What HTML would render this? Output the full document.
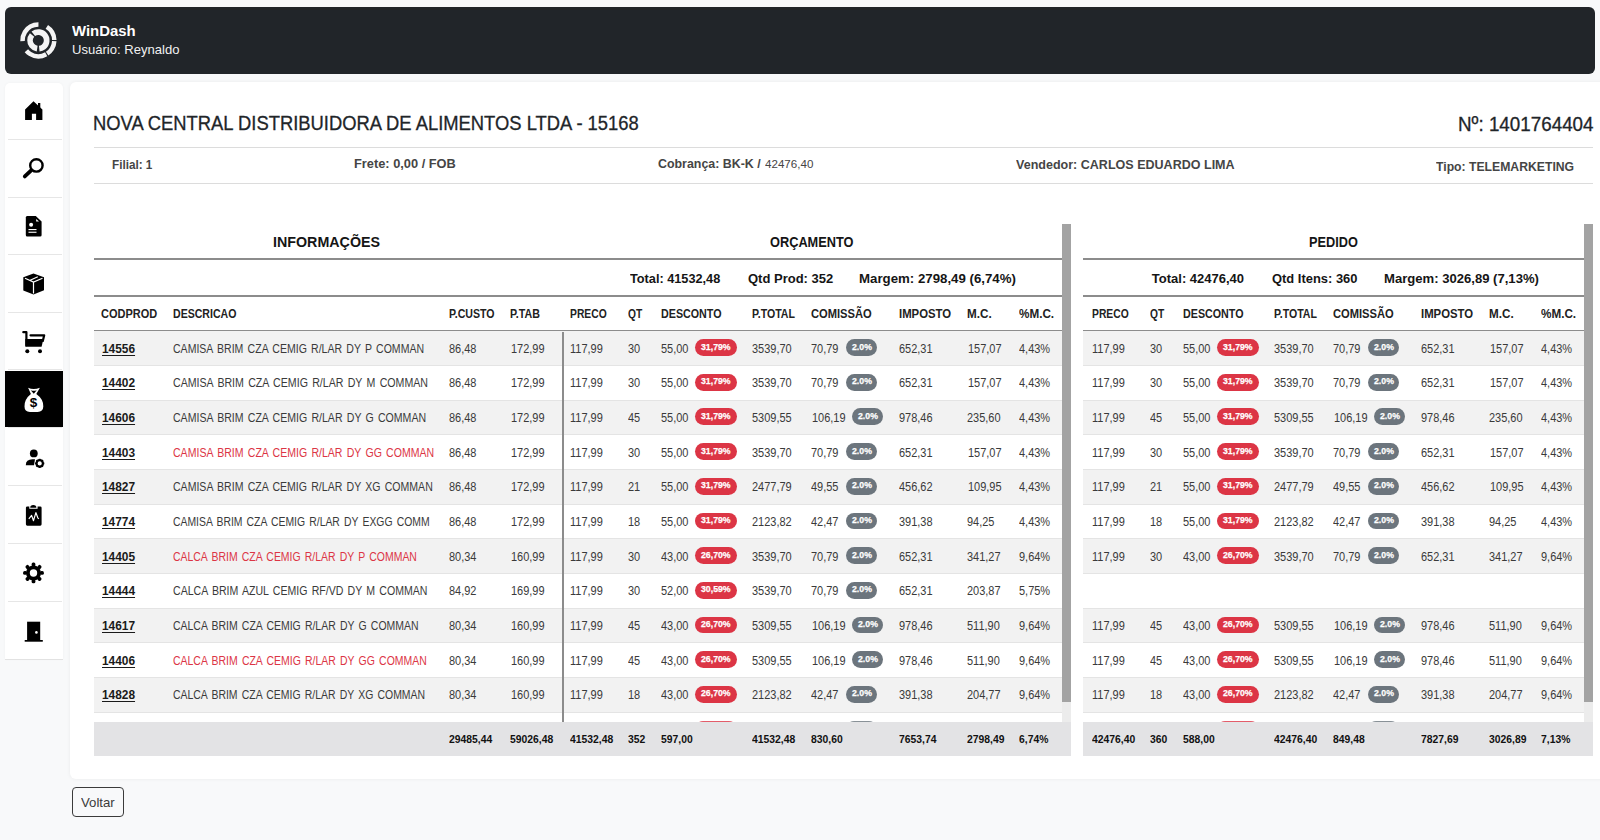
<!DOCTYPE html>
<html><head><meta charset="utf-8"><style>
html,body{margin:0;padding:0;width:1600px;height:840px;overflow:hidden;background:#f8f9fa;font-family:"Liberation Sans", sans-serif;}
.t{position:absolute;white-space:nowrap;}
</style></head><body>
<div style="position:absolute;left:5px;top:7px;width:1590px;height:67px;background:#212529;border-radius:6px;"></div><svg style="position:absolute;left:18px;top:20px" width="42" height="42" viewBox="-21 -21 42 42">
<g transform="translate(-0.6,-0.6)">
<circle r="15.9" fill="none" stroke="#f4f4f4" stroke-width="4.5" stroke-dasharray="15.540,1.110,14.985,1.110,21.646,10.545,25.531,9.435" transform="rotate(-58)"/>
<circle r="8.3" fill="none" stroke="#f4f4f4" stroke-width="5.7" stroke-dasharray="30.566,2.028,17.528,2.028" transform="rotate(232)"/>
</g></svg><div style="position:absolute;left:5px;top:83px;width:58px;height:576px;background:#ffffff;border-radius:5px 5px 0 0;box-shadow:0 0 3px rgba(0,0,0,0.04);"></div><div style="position:absolute;left:8px;top:139px;width:54px;height:1px;background:#e6e6e6;"></div><div style="position:absolute;left:8px;top:196.5px;width:54px;height:1px;background:#e6e6e6;"></div><div style="position:absolute;left:8px;top:254px;width:54px;height:1px;background:#e6e6e6;"></div><div style="position:absolute;left:8px;top:311.5px;width:54px;height:1px;background:#e6e6e6;"></div><div style="position:absolute;left:8px;top:369.2px;width:54px;height:1px;background:#e6e6e6;"></div><div style="position:absolute;left:8px;top:427px;width:54px;height:1px;background:#e6e6e6;"></div><div style="position:absolute;left:8px;top:485px;width:54px;height:1px;background:#e6e6e6;"></div><div style="position:absolute;left:8px;top:542.7px;width:54px;height:1px;background:#e6e6e6;"></div><div style="position:absolute;left:8px;top:600.5px;width:54px;height:1px;background:#e6e6e6;"></div><div style="position:absolute;left:5px;top:659px;width:58px;height:1px;background:#e2e2e2;"></div><div style="position:absolute;left:5px;top:370.7px;width:58px;height:56.7px;background:#000000;"></div><svg style="position:absolute;left:14px;top:90px" width="40" height="40" viewBox="0 0 40 40"><path d="M19.5 11.2 L28.4 19.6 V30 H22.1 V23.8 H17.9 V30 H11.1 V19.6 Z" fill="#000"/><rect x="24" y="13" width="2.3" height="5" fill="#000"/></svg><svg style="position:absolute;left:14px;top:148px" width="40" height="40" viewBox="0 0 40 40"><circle cx="22.4" cy="17.4" r="6.2" fill="none" stroke="#000" stroke-width="2.4"/><line x1="10.8" y1="28.4" x2="17.2" y2="22.4" stroke="#000" stroke-width="3.8" stroke-linecap="round"/></svg><svg style="position:absolute;left:14px;top:206px" width="40" height="40" viewBox="0 0 40 40"><path d="M13.2 10 H21.8 L27.6 15.6 V29 Q27.6 30.5 26.1 30.5 H13.2 Q11.8 30.5 11.8 29 V11.5 Q11.8 10 13.2 10 Z" fill="#000"/><path d="M22.2 13 L25 15.6 H22.2 Z" fill="#fff"/><circle cx="17.1" cy="18.8" r="2" fill="#fff"/><rect x="14.5" y="23" width="8" height="1.1" fill="#fff"/><rect x="14.5" y="25.7" width="8" height="1.1" fill="#fff"/></svg><svg style="position:absolute;left:14px;top:263px" width="40" height="40" viewBox="0 0 40 40"><path d="M19.5 10.5 L30 14.3 V27.2 L19.5 31.4 L9.3 27.4 V14.3 Z" fill="#000"/><path d="M11 15.3 L19.5 19 L28.5 15.3 M19.5 19 V30.5 M16.2 17.2 L23.8 13.8" stroke="#fff" stroke-width="1.2" fill="none"/></svg><svg style="position:absolute;left:14px;top:321px" width="40" height="40" viewBox="0 0 40 40"><path d="M9.3 11.2 H12.4 V24.2" stroke="#000" stroke-width="2.2" fill="none" stroke-linecap="round" stroke-linejoin="round"/><path d="M16.5 14.3 H30.2 L28.8 20" stroke="#000" stroke-width="2.2" fill="none" stroke-linecap="round" stroke-linejoin="round"/><path d="M11.3 18 H29.4 L27.6 25.7 H11.3 Z" fill="#000"/><circle cx="13.3" cy="30.2" r="2" fill="#000"/><circle cx="26" cy="30.2" r="2" fill="#000"/></svg><svg style="position:absolute;left:14px;top:379px" width="40" height="40" viewBox="0 0 40 40"><path d="M14.1 8.7 Q19.5 11.4 25.9 8.7 L22.3 15.1 Q29.6 20.3 29.3 27.6 Q29.1 33 23.6 33 H15.9 Q10.5 33 10.5 27.6 Q10.3 20.3 16.9 15.1 Z" fill="#fff"/><path d="M16.7 11.3 Q19.5 12.4 22.7 11.3 L19.8 14.7 Z" fill="#000"/><text x="19.6" y="27.9" font-family="Liberation Sans" font-weight="700" font-size="13.5" text-anchor="middle" fill="#000">$</text></svg><svg style="position:absolute;left:14px;top:437px" width="40" height="40" viewBox="0 0 40 40"><circle cx="19.8" cy="16.4" r="3.9" fill="#000"/><path d="M11.8 28.2 Q11.8 22.4 18.5 22.3 H21 L20 28.2 Z" fill="#000"/><g transform="translate(25.7 26.4)"><circle r="3.2" fill="none" stroke="#000" stroke-width="2.2"/><rect x="-0.9" y="-4.6" width="1.8" height="2" fill="#000" transform="rotate(0)"/><rect x="-0.9" y="-4.6" width="1.8" height="2" fill="#000" transform="rotate(45)"/><rect x="-0.9" y="-4.6" width="1.8" height="2" fill="#000" transform="rotate(90)"/><rect x="-0.9" y="-4.6" width="1.8" height="2" fill="#000" transform="rotate(135)"/><rect x="-0.9" y="-4.6" width="1.8" height="2" fill="#000" transform="rotate(180)"/><rect x="-0.9" y="-4.6" width="1.8" height="2" fill="#000" transform="rotate(225)"/><rect x="-0.9" y="-4.6" width="1.8" height="2" fill="#000" transform="rotate(270)"/><rect x="-0.9" y="-4.6" width="1.8" height="2" fill="#000" transform="rotate(315)"/></g></svg><svg style="position:absolute;left:14px;top:494px" width="40" height="40" viewBox="0 0 40 40"><path d="M13.3 12.4 H15.3 V14.8 H23.6 V12.4 H26.2 Q27.6 12.4 27.6 13.8 V30.3 Q27.6 31.7 26.2 31.7 H13.3 Q11.9 31.7 11.9 30.3 V13.8 Q11.9 12.4 13.3 12.4 Z" fill="#000"/><path d="M16.2 13.8 Q16.2 11 19.3 11 Q22.4 11 22.4 13.8 Z" fill="#000"/><path d="M14.8 24.8 L17.6 21.4 L19.5 26.7 L21.9 18.6 L23.8 23.8 L24.8 24.8" stroke="#fff" stroke-width="1.2" fill="none" stroke-linejoin="round"/></svg><svg style="position:absolute;left:14px;top:552px" width="40" height="40" viewBox="0 0 40 40"><g transform="translate(19.5 20.95)"><circle r="5.6" fill="none" stroke="#000" stroke-width="3.8"/><rect x="-1.9" y="-10.4" width="3.8" height="4" rx="1.6" fill="#000" transform="rotate(0)"/><rect x="-1.9" y="-10.4" width="3.8" height="4" rx="1.6" fill="#000" transform="rotate(45)"/><rect x="-1.9" y="-10.4" width="3.8" height="4" rx="1.6" fill="#000" transform="rotate(90)"/><rect x="-1.9" y="-10.4" width="3.8" height="4" rx="1.6" fill="#000" transform="rotate(135)"/><rect x="-1.9" y="-10.4" width="3.8" height="4" rx="1.6" fill="#000" transform="rotate(180)"/><rect x="-1.9" y="-10.4" width="3.8" height="4" rx="1.6" fill="#000" transform="rotate(225)"/><rect x="-1.9" y="-10.4" width="3.8" height="4" rx="1.6" fill="#000" transform="rotate(270)"/><rect x="-1.9" y="-10.4" width="3.8" height="4" rx="1.6" fill="#000" transform="rotate(315)"/></g></svg><svg style="position:absolute;left:14px;top:610px" width="40" height="40" viewBox="0 0 40 40"><rect x="13.1" y="11.7" width="13.1" height="19" fill="#000"/><rect x="10.7" y="30" width="18.1" height="1.7" fill="#000"/><circle cx="22.4" cy="22.4" r="1.3" fill="#fff"/></svg><div style="position:absolute;left:70px;top:82px;width:1540px;height:697px;background:#ffffff;border-radius:6px;box-shadow:0 0 4px rgba(0,0,0,0.06);"></div><div style="position:absolute;left:94px;top:147px;width:1499px;height:1px;background:#dcdcdc;"></div><div style="position:absolute;left:94px;top:182.5px;width:1499px;height:1px;background:#dcdcdc;"></div><div style="position:absolute;left:94px;top:258px;width:968px;height:2px;background:#8c8c8c;"></div><div style="position:absolute;left:94px;top:295px;width:968px;height:2px;background:#8c8c8c;"></div><div style="position:absolute;left:94px;top:330px;width:968px;height:2px;background:#8c8c8c;"></div><div style="position:absolute;left:1083px;top:258px;width:501px;height:2px;background:#8c8c8c;"></div><div style="position:absolute;left:1083px;top:295px;width:501px;height:2px;background:#8c8c8c;"></div><div style="position:absolute;left:1083px;top:330px;width:501px;height:2px;background:#8c8c8c;"></div><div style="position:absolute;left:94px;top:331.3px;width:968px;height:34.67px;background:#f2f2f2;"></div><div style="position:absolute;left:1083px;top:331.3px;width:501px;height:34.67px;background:#f2f2f2;"></div><div style="position:absolute;left:94px;top:364.97px;width:968px;height:1px;background:#e4e4e4;"></div><div style="position:absolute;left:1083px;top:364.97px;width:501px;height:1px;background:#e4e4e4;"></div><div style="position:absolute;left:94px;top:399.64000000000004px;width:968px;height:1px;background:#e4e4e4;"></div><div style="position:absolute;left:1083px;top:399.64000000000004px;width:501px;height:1px;background:#e4e4e4;"></div><div style="position:absolute;left:94px;top:400.64px;width:968px;height:34.67px;background:#f2f2f2;"></div><div style="position:absolute;left:1083px;top:400.64px;width:501px;height:34.67px;background:#f2f2f2;"></div><div style="position:absolute;left:94px;top:434.31px;width:968px;height:1px;background:#e4e4e4;"></div><div style="position:absolute;left:1083px;top:434.31px;width:501px;height:1px;background:#e4e4e4;"></div><div style="position:absolute;left:94px;top:468.98px;width:968px;height:1px;background:#e4e4e4;"></div><div style="position:absolute;left:1083px;top:468.98px;width:501px;height:1px;background:#e4e4e4;"></div><div style="position:absolute;left:94px;top:469.98px;width:968px;height:34.67px;background:#f2f2f2;"></div><div style="position:absolute;left:1083px;top:469.98px;width:501px;height:34.67px;background:#f2f2f2;"></div><div style="position:absolute;left:94px;top:503.65000000000003px;width:968px;height:1px;background:#e4e4e4;"></div><div style="position:absolute;left:1083px;top:503.65000000000003px;width:501px;height:1px;background:#e4e4e4;"></div><div style="position:absolute;left:94px;top:538.32px;width:968px;height:1px;background:#e4e4e4;"></div><div style="position:absolute;left:1083px;top:538.32px;width:501px;height:1px;background:#e4e4e4;"></div><div style="position:absolute;left:94px;top:539.32px;width:968px;height:34.67px;background:#f2f2f2;"></div><div style="position:absolute;left:1083px;top:539.32px;width:501px;height:34.67px;background:#f2f2f2;"></div><div style="position:absolute;left:94px;top:572.99px;width:968px;height:1px;background:#e4e4e4;"></div><div style="position:absolute;left:1083px;top:572.99px;width:501px;height:1px;background:#e4e4e4;"></div><div style="position:absolute;left:94px;top:607.66px;width:968px;height:1px;background:#e4e4e4;"></div><div style="position:absolute;left:1083px;top:607.66px;width:501px;height:1px;background:#e4e4e4;"></div><div style="position:absolute;left:94px;top:608.6600000000001px;width:968px;height:34.67px;background:#f2f2f2;"></div><div style="position:absolute;left:1083px;top:608.6600000000001px;width:501px;height:34.67px;background:#f2f2f2;"></div><div style="position:absolute;left:94px;top:642.33px;width:968px;height:1px;background:#e4e4e4;"></div><div style="position:absolute;left:1083px;top:642.33px;width:501px;height:1px;background:#e4e4e4;"></div><div style="position:absolute;left:94px;top:677.0px;width:968px;height:1px;background:#e4e4e4;"></div><div style="position:absolute;left:1083px;top:677.0px;width:501px;height:1px;background:#e4e4e4;"></div><div style="position:absolute;left:94px;top:678.0px;width:968px;height:34.67px;background:#f2f2f2;"></div><div style="position:absolute;left:1083px;top:678.0px;width:501px;height:34.67px;background:#f2f2f2;"></div><div style="position:absolute;left:94px;top:711.67px;width:968px;height:1px;background:#e4e4e4;"></div><div style="position:absolute;left:1083px;top:711.67px;width:501px;height:1px;background:#e4e4e4;"></div><div style="position:absolute;left:695.20px;top:339.15px;width:41.40px;height:16.7px;border-radius:8.4px;background:#dc3545"></div><div style="position:absolute;left:846.20px;top:339.15px;width:31.20px;height:16.7px;border-radius:8.4px;background:#6c757d"></div><div style="position:absolute;left:1217.20px;top:339.15px;width:41.40px;height:16.7px;border-radius:8.4px;background:#dc3545"></div><div style="position:absolute;left:1368.20px;top:339.15px;width:31.20px;height:16.7px;border-radius:8.4px;background:#6c757d"></div><div style="position:absolute;left:695.20px;top:373.82px;width:41.40px;height:16.7px;border-radius:8.4px;background:#dc3545"></div><div style="position:absolute;left:846.20px;top:373.82px;width:31.20px;height:16.7px;border-radius:8.4px;background:#6c757d"></div><div style="position:absolute;left:1217.20px;top:373.82px;width:41.40px;height:16.7px;border-radius:8.4px;background:#dc3545"></div><div style="position:absolute;left:1368.20px;top:373.82px;width:31.20px;height:16.7px;border-radius:8.4px;background:#6c757d"></div><div style="position:absolute;left:695.20px;top:408.49px;width:41.40px;height:16.7px;border-radius:8.4px;background:#dc3545"></div><div style="position:absolute;left:852.30px;top:408.49px;width:31.20px;height:16.7px;border-radius:8.4px;background:#6c757d"></div><div style="position:absolute;left:1217.20px;top:408.49px;width:41.40px;height:16.7px;border-radius:8.4px;background:#dc3545"></div><div style="position:absolute;left:1374.30px;top:408.49px;width:31.20px;height:16.7px;border-radius:8.4px;background:#6c757d"></div><div style="position:absolute;left:695.20px;top:443.16px;width:41.40px;height:16.7px;border-radius:8.4px;background:#dc3545"></div><div style="position:absolute;left:846.20px;top:443.16px;width:31.20px;height:16.7px;border-radius:8.4px;background:#6c757d"></div><div style="position:absolute;left:1217.20px;top:443.16px;width:41.40px;height:16.7px;border-radius:8.4px;background:#dc3545"></div><div style="position:absolute;left:1368.20px;top:443.16px;width:31.20px;height:16.7px;border-radius:8.4px;background:#6c757d"></div><div style="position:absolute;left:695.20px;top:477.83px;width:41.40px;height:16.7px;border-radius:8.4px;background:#dc3545"></div><div style="position:absolute;left:846.20px;top:477.83px;width:31.20px;height:16.7px;border-radius:8.4px;background:#6c757d"></div><div style="position:absolute;left:1217.20px;top:477.83px;width:41.40px;height:16.7px;border-radius:8.4px;background:#dc3545"></div><div style="position:absolute;left:1368.20px;top:477.83px;width:31.20px;height:16.7px;border-radius:8.4px;background:#6c757d"></div><div style="position:absolute;left:695.20px;top:512.50px;width:41.40px;height:16.7px;border-radius:8.4px;background:#dc3545"></div><div style="position:absolute;left:846.20px;top:512.50px;width:31.20px;height:16.7px;border-radius:8.4px;background:#6c757d"></div><div style="position:absolute;left:1217.20px;top:512.50px;width:41.40px;height:16.7px;border-radius:8.4px;background:#dc3545"></div><div style="position:absolute;left:1368.20px;top:512.50px;width:31.20px;height:16.7px;border-radius:8.4px;background:#6c757d"></div><div style="position:absolute;left:695.20px;top:547.17px;width:41.40px;height:16.7px;border-radius:8.4px;background:#dc3545"></div><div style="position:absolute;left:846.20px;top:547.17px;width:31.20px;height:16.7px;border-radius:8.4px;background:#6c757d"></div><div style="position:absolute;left:1217.20px;top:547.17px;width:41.40px;height:16.7px;border-radius:8.4px;background:#dc3545"></div><div style="position:absolute;left:1368.20px;top:547.17px;width:31.20px;height:16.7px;border-radius:8.4px;background:#6c757d"></div><div style="position:absolute;left:695.20px;top:581.84px;width:41.40px;height:16.7px;border-radius:8.4px;background:#dc3545"></div><div style="position:absolute;left:846.20px;top:581.84px;width:31.20px;height:16.7px;border-radius:8.4px;background:#6c757d"></div><div style="position:absolute;left:695.20px;top:616.51px;width:41.40px;height:16.7px;border-radius:8.4px;background:#dc3545"></div><div style="position:absolute;left:852.30px;top:616.51px;width:31.20px;height:16.7px;border-radius:8.4px;background:#6c757d"></div><div style="position:absolute;left:1217.20px;top:616.51px;width:41.40px;height:16.7px;border-radius:8.4px;background:#dc3545"></div><div style="position:absolute;left:1374.30px;top:616.51px;width:31.20px;height:16.7px;border-radius:8.4px;background:#6c757d"></div><div style="position:absolute;left:695.20px;top:651.18px;width:41.40px;height:16.7px;border-radius:8.4px;background:#dc3545"></div><div style="position:absolute;left:852.30px;top:651.18px;width:31.20px;height:16.7px;border-radius:8.4px;background:#6c757d"></div><div style="position:absolute;left:1217.20px;top:651.18px;width:41.40px;height:16.7px;border-radius:8.4px;background:#dc3545"></div><div style="position:absolute;left:1374.30px;top:651.18px;width:31.20px;height:16.7px;border-radius:8.4px;background:#6c757d"></div><div style="position:absolute;left:695.20px;top:685.85px;width:41.40px;height:16.7px;border-radius:8.4px;background:#dc3545"></div><div style="position:absolute;left:846.20px;top:685.85px;width:31.20px;height:16.7px;border-radius:8.4px;background:#6c757d"></div><div style="position:absolute;left:1217.20px;top:685.85px;width:41.40px;height:16.7px;border-radius:8.4px;background:#dc3545"></div><div style="position:absolute;left:1368.20px;top:685.85px;width:31.20px;height:16.7px;border-radius:8.4px;background:#6c757d"></div><div style="position:absolute;left:94px;top:712.7px;width:968px;height:9.3px;background:#ffffff;"></div><div style="position:absolute;left:1083px;top:712.7px;width:501px;height:9.3px;background:#ffffff;"></div><div style="position:absolute;left:94px;top:712.7px;width:968px;height:9.3px;overflow:hidden"><div style="position:absolute;left:601.20px;top:8px;width:41.4px;height:16.7px;border-radius:8.4px;background:#dc3545;opacity:0.8"></div><div style="position:absolute;left:752.20px;top:8px;width:31.2px;height:16.7px;border-radius:8.4px;background:#6c757d;opacity:0.8"></div></div><div style="position:absolute;left:1083px;top:712.7px;width:501px;height:9.3px;overflow:hidden"><div style="position:absolute;left:134.20px;top:8px;width:41.4px;height:16.7px;border-radius:8.4px;background:#dc3545;opacity:0.8"></div><div style="position:absolute;left:285.20px;top:8px;width:31.2px;height:16.7px;border-radius:8.4px;background:#6c757d;opacity:0.8"></div></div><div style="position:absolute;left:562px;top:331.5px;width:2px;height:390.5px;background:#8c8c8c;"></div><div style="position:absolute;left:94px;top:722px;width:977px;height:33.7px;background:#e3e3e5;"></div><div style="position:absolute;left:1083px;top:722px;width:510px;height:33.7px;background:#e3e3e5;"></div><div style="position:absolute;left:1062px;top:224.3px;width:9px;height:477.7px;background:#a3a3a3;"></div><div style="position:absolute;left:1062px;top:702px;width:9px;height:20px;background:#ececec;"></div><div style="position:absolute;left:1584px;top:224.3px;width:9px;height:477.7px;background:#a3a3a3;"></div><div style="position:absolute;left:1584px;top:702px;width:9px;height:20px;background:#ececec;"></div><div style="position:absolute;left:72px;top:787px;width:50px;height:28px;border:1.2px solid #3b3b3b;border-radius:4px;background:#f8f9fa"></div>
<div class="t" style="left:72.20px;top:23.00px;font-size:15px;line-height:15px;font-weight:700;color:#ffffff;transform:scaleX(0.9937);transform-origin:0 0;">WinDash</div><div class="t" style="left:71.63px;top:43.37px;font-size:13.5px;line-height:13.5px;font-weight:400;color:#f1f1f1;transform:scaleX(0.9682);transform-origin:0 0;">Usuário: Reynaldo</div><div class="t" style="left:93.28px;top:113.07px;font-size:20px;line-height:20px;font-weight:400;color:#212529;transform:scaleX(0.9189);transform-origin:0 0;-webkit-text-stroke:0.3px #212529;">NOVA CENTRAL DISTRIBUIDORA DE ALIMENTOS LTDA - 15168</div><div class="t" style="left:1457.56px;top:114.47px;font-size:20px;line-height:20px;font-weight:400;color:#212529;transform:scaleX(0.9406);transform-origin:0 0;-webkit-text-stroke:0.3px #212529;">Nº: 1401764404</div><div class="t" style="left:112.40px;top:157.60px;font-size:13px;line-height:13px;font-weight:700;color:#454545;transform:scaleX(0.9000);transform-origin:0 0;">Filial: 1</div><div class="t" style="left:353.81px;top:157.40px;font-size:13px;line-height:13px;font-weight:700;color:#454545;transform:scaleX(0.9853);transform-origin:0 0;">Frete: 0,00 / FOB</div><div class="t" style="left:657.80px;top:157.20px;font-size:13px;line-height:13px;font-weight:700;color:#454545;transform:scaleX(0.9537);transform-origin:0 0;">Cobrança: BK-K /</div><div class="t" style="left:765.40px;top:158.67px;font-size:11.5px;line-height:11.5px;font-weight:400;color:#454545;transform:scaleX(1.0083);transform-origin:0 0;">42476,40</div><div class="t" style="left:1015.60px;top:157.60px;font-size:13px;line-height:13px;font-weight:700;color:#454545;transform:scaleX(0.9639);transform-origin:0 0;">Vendedor: CARLOS EDUARDO LIMA</div><div class="t" style="left:1435.80px;top:160.20px;font-size:13px;line-height:13px;font-weight:700;color:#454545;transform:scaleX(0.9388);transform-origin:0 0;">Tipo: TELEMARKETING</div><div class="t" style="left:273.38px;top:235.45px;font-size:14px;line-height:14px;font-weight:700;color:#151515;transform:scaleX(1.0192);transform-origin:0 0;">INFORMAÇÕES</div><div class="t" style="left:770.00px;top:235.45px;font-size:14px;line-height:14px;font-weight:700;color:#151515;transform:scaleX(0.9121);transform-origin:0 0;">ORÇAMENTO</div><div class="t" style="left:1308.84px;top:235.45px;font-size:14px;line-height:14px;font-weight:700;color:#151515;transform:scaleX(0.9096);transform-origin:0 0;">PEDIDO</div><div class="t" style="left:630.00px;top:272.00px;font-size:13px;line-height:13px;font-weight:700;color:#151515;transform:scaleX(0.9783);transform-origin:0 0;">Total: 41532,48</div><div class="t" style="left:748.00px;top:272.00px;font-size:13px;line-height:13px;font-weight:700;color:#151515;">Qtd Prod: 352</div><div class="t" style="left:858.98px;top:272.00px;font-size:13px;line-height:13px;font-weight:700;color:#151515;transform:scaleX(1.0196);transform-origin:0 0;">Margem: 2798,49 (6,74%)</div><div class="t" style="left:1151.80px;top:272.00px;font-size:13px;line-height:13px;font-weight:700;color:#151515;">Total: 42476,40</div><div class="t" style="left:1271.60px;top:272.00px;font-size:13px;line-height:13px;font-weight:700;color:#151515;transform:scaleX(0.9942);transform-origin:0 0;">Qtd Itens: 360</div><div class="t" style="left:1383.69px;top:272.00px;font-size:13px;line-height:13px;font-weight:700;color:#151515;transform:scaleX(1.0065);transform-origin:0 0;">Margem: 3026,89 (7,13%)</div><div class="t" style="left:101.30px;top:307.54px;font-size:12px;line-height:12px;font-weight:700;color:#222222;transform:scaleX(0.9164);transform-origin:0 0;">CODPROD</div><div class="t" style="left:172.80px;top:307.54px;font-size:12px;line-height:12px;font-weight:700;color:#222222;transform:scaleX(0.8806);transform-origin:0 0;">DESCRICAO</div><div class="t" style="left:449.00px;top:307.54px;font-size:12px;line-height:12px;font-weight:700;color:#222222;transform:scaleX(0.8824);transform-origin:0 0;">P.CUSTO</div><div class="t" style="left:510.30px;top:307.54px;font-size:12px;line-height:12px;font-weight:700;color:#222222;transform:scaleX(0.8909);transform-origin:0 0;">P.TAB</div><div class="t" style="left:569.50px;top:307.54px;font-size:12px;line-height:12px;font-weight:700;color:#222222;transform:scaleX(0.8595);transform-origin:0 0;">PRECO</div><div class="t" style="left:627.70px;top:307.54px;font-size:12px;line-height:12px;font-weight:700;color:#222222;transform:scaleX(0.8529);transform-origin:0 0;">QT</div><div class="t" style="left:660.80px;top:307.54px;font-size:12px;line-height:12px;font-weight:700;color:#222222;transform:scaleX(0.8926);transform-origin:0 0;">DESCONTO</div><div class="t" style="left:752.00px;top:307.54px;font-size:12px;line-height:12px;font-weight:700;color:#222222;transform:scaleX(0.8816);transform-origin:0 0;">P.TOTAL</div><div class="t" style="left:811.00px;top:307.54px;font-size:12px;line-height:12px;font-weight:700;color:#222222;transform:scaleX(0.9292);transform-origin:0 0;">COMISSÃO</div><div class="t" style="left:899.00px;top:307.54px;font-size:12px;line-height:12px;font-weight:700;color:#222222;transform:scaleX(0.9455);transform-origin:0 0;">IMPOSTO</div><div class="t" style="left:967.00px;top:307.54px;font-size:12px;line-height:12px;font-weight:700;color:#222222;transform:scaleX(0.9720);transform-origin:0 0;">M.C.</div><div class="t" style="left:1019.20px;top:307.54px;font-size:12px;line-height:12px;font-weight:700;color:#222222;transform:scaleX(0.9750);transform-origin:0 0;">%M.C.</div><div class="t" style="left:1091.50px;top:307.54px;font-size:12px;line-height:12px;font-weight:700;color:#222222;transform:scaleX(0.8595);transform-origin:0 0;">PRECO</div><div class="t" style="left:1149.70px;top:307.54px;font-size:12px;line-height:12px;font-weight:700;color:#222222;transform:scaleX(0.8529);transform-origin:0 0;">QT</div><div class="t" style="left:1182.80px;top:307.54px;font-size:12px;line-height:12px;font-weight:700;color:#222222;transform:scaleX(0.8926);transform-origin:0 0;">DESCONTO</div><div class="t" style="left:1274.00px;top:307.54px;font-size:12px;line-height:12px;font-weight:700;color:#222222;transform:scaleX(0.8816);transform-origin:0 0;">P.TOTAL</div><div class="t" style="left:1333.00px;top:307.54px;font-size:12px;line-height:12px;font-weight:700;color:#222222;transform:scaleX(0.9292);transform-origin:0 0;">COMISSÃO</div><div class="t" style="left:1421.00px;top:307.54px;font-size:12px;line-height:12px;font-weight:700;color:#222222;transform:scaleX(0.9455);transform-origin:0 0;">IMPOSTO</div><div class="t" style="left:1489.00px;top:307.54px;font-size:12px;line-height:12px;font-weight:700;color:#222222;transform:scaleX(0.9720);transform-origin:0 0;">M.C.</div><div class="t" style="left:1541.20px;top:307.54px;font-size:12px;line-height:12px;font-weight:700;color:#222222;transform:scaleX(0.9750);transform-origin:0 0;">%M.C.</div><div class="t" style="left:101.80px;top:342.59px;font-size:12px;line-height:12px;font-weight:700;color:#1a1a1a;transform:scaleX(0.9900);transform-origin:0 0;text-decoration:underline;text-underline-offset:1.5px;">14556</div><div class="t" style="left:172.80px;top:342.59px;font-size:12px;line-height:12px;font-weight:400;color:#3a3a3a;transform:scaleX(0.8774);transform-origin:0 0;word-spacing:1.5px;">CAMISA BRIM CZA CEMIG R/LAR DY P COMMAN</div><div class="t" style="left:449.00px;top:342.59px;font-size:12px;line-height:12px;font-weight:400;color:#3a3a3a;transform:scaleX(0.9150);transform-origin:0 0;">86,48</div><div class="t" style="left:510.88px;top:342.59px;font-size:12px;line-height:12px;font-weight:400;color:#3a3a3a;transform:scaleX(0.9150);transform-origin:0 0;">172,99</div><div class="t" style="left:570.09px;top:342.59px;font-size:12px;line-height:12px;font-weight:400;color:#3a3a3a;transform:scaleX(0.9150);transform-origin:0 0;">117,99</div><div class="t" style="left:627.70px;top:342.59px;font-size:12px;line-height:12px;font-weight:400;color:#3a3a3a;transform:scaleX(0.9150);transform-origin:0 0;">30</div><div class="t" style="left:660.80px;top:342.59px;font-size:12px;line-height:12px;font-weight:400;color:#3a3a3a;transform:scaleX(0.9150);transform-origin:0 0;">55,00</div><div class="t" style="left:701.18px;top:341.51px;font-size:9.5px;line-height:9.5px;font-weight:700;color:#ffffff;transform:scaleX(0.9200);transform-origin:0 0;-webkit-text-stroke:0.25px #fff;">31,79%</div><div class="t" style="left:752.00px;top:342.59px;font-size:12px;line-height:12px;font-weight:400;color:#3a3a3a;transform:scaleX(0.9150);transform-origin:0 0;">3539,70</div><div class="t" style="left:811.00px;top:342.59px;font-size:12px;line-height:12px;font-weight:400;color:#3a3a3a;transform:scaleX(0.9150);transform-origin:0 0;">70,79</div><div class="t" style="left:851.68px;top:341.51px;font-size:9.5px;line-height:9.5px;font-weight:700;color:#ffffff;transform:scaleX(0.9200);transform-origin:0 0;-webkit-text-stroke:0.25px #fff;">2.0%</div><div class="t" style="left:899.00px;top:342.59px;font-size:12px;line-height:12px;font-weight:400;color:#3a3a3a;transform:scaleX(0.9150);transform-origin:0 0;">652,31</div><div class="t" style="left:967.59px;top:342.59px;font-size:12px;line-height:12px;font-weight:400;color:#3a3a3a;transform:scaleX(0.9150);transform-origin:0 0;">157,07</div><div class="t" style="left:1019.20px;top:342.59px;font-size:12px;line-height:12px;font-weight:400;color:#3a3a3a;transform:scaleX(0.9150);transform-origin:0 0;">4,43%</div><div class="t" style="left:1092.09px;top:342.59px;font-size:12px;line-height:12px;font-weight:400;color:#3a3a3a;transform:scaleX(0.9150);transform-origin:0 0;">117,99</div><div class="t" style="left:1149.70px;top:342.59px;font-size:12px;line-height:12px;font-weight:400;color:#3a3a3a;transform:scaleX(0.9150);transform-origin:0 0;">30</div><div class="t" style="left:1182.80px;top:342.59px;font-size:12px;line-height:12px;font-weight:400;color:#3a3a3a;transform:scaleX(0.9150);transform-origin:0 0;">55,00</div><div class="t" style="left:1223.18px;top:341.51px;font-size:9.5px;line-height:9.5px;font-weight:700;color:#ffffff;transform:scaleX(0.9200);transform-origin:0 0;-webkit-text-stroke:0.25px #fff;">31,79%</div><div class="t" style="left:1274.00px;top:342.59px;font-size:12px;line-height:12px;font-weight:400;color:#3a3a3a;transform:scaleX(0.9150);transform-origin:0 0;">3539,70</div><div class="t" style="left:1333.00px;top:342.59px;font-size:12px;line-height:12px;font-weight:400;color:#3a3a3a;transform:scaleX(0.9150);transform-origin:0 0;">70,79</div><div class="t" style="left:1373.68px;top:341.51px;font-size:9.5px;line-height:9.5px;font-weight:700;color:#ffffff;transform:scaleX(0.9200);transform-origin:0 0;-webkit-text-stroke:0.25px #fff;">2.0%</div><div class="t" style="left:1421.00px;top:342.59px;font-size:12px;line-height:12px;font-weight:400;color:#3a3a3a;transform:scaleX(0.9150);transform-origin:0 0;">652,31</div><div class="t" style="left:1489.59px;top:342.59px;font-size:12px;line-height:12px;font-weight:400;color:#3a3a3a;transform:scaleX(0.9150);transform-origin:0 0;">157,07</div><div class="t" style="left:1541.20px;top:342.59px;font-size:12px;line-height:12px;font-weight:400;color:#3a3a3a;transform:scaleX(0.9150);transform-origin:0 0;">4,43%</div><div class="t" style="left:101.80px;top:377.26px;font-size:12px;line-height:12px;font-weight:700;color:#1a1a1a;transform:scaleX(0.9900);transform-origin:0 0;text-decoration:underline;text-underline-offset:1.5px;">14402</div><div class="t" style="left:172.80px;top:377.26px;font-size:12px;line-height:12px;font-weight:400;color:#3a3a3a;transform:scaleX(0.8844);transform-origin:0 0;word-spacing:1.5px;">CAMISA BRIM CZA CEMIG R/LAR DY M COMMAN</div><div class="t" style="left:449.00px;top:377.26px;font-size:12px;line-height:12px;font-weight:400;color:#3a3a3a;transform:scaleX(0.9150);transform-origin:0 0;">86,48</div><div class="t" style="left:510.88px;top:377.26px;font-size:12px;line-height:12px;font-weight:400;color:#3a3a3a;transform:scaleX(0.9150);transform-origin:0 0;">172,99</div><div class="t" style="left:570.09px;top:377.26px;font-size:12px;line-height:12px;font-weight:400;color:#3a3a3a;transform:scaleX(0.9150);transform-origin:0 0;">117,99</div><div class="t" style="left:627.70px;top:377.26px;font-size:12px;line-height:12px;font-weight:400;color:#3a3a3a;transform:scaleX(0.9150);transform-origin:0 0;">30</div><div class="t" style="left:660.80px;top:377.26px;font-size:12px;line-height:12px;font-weight:400;color:#3a3a3a;transform:scaleX(0.9150);transform-origin:0 0;">55,00</div><div class="t" style="left:701.18px;top:376.18px;font-size:9.5px;line-height:9.5px;font-weight:700;color:#ffffff;transform:scaleX(0.9200);transform-origin:0 0;-webkit-text-stroke:0.25px #fff;">31,79%</div><div class="t" style="left:752.00px;top:377.26px;font-size:12px;line-height:12px;font-weight:400;color:#3a3a3a;transform:scaleX(0.9150);transform-origin:0 0;">3539,70</div><div class="t" style="left:811.00px;top:377.26px;font-size:12px;line-height:12px;font-weight:400;color:#3a3a3a;transform:scaleX(0.9150);transform-origin:0 0;">70,79</div><div class="t" style="left:851.68px;top:376.18px;font-size:9.5px;line-height:9.5px;font-weight:700;color:#ffffff;transform:scaleX(0.9200);transform-origin:0 0;-webkit-text-stroke:0.25px #fff;">2.0%</div><div class="t" style="left:899.00px;top:377.26px;font-size:12px;line-height:12px;font-weight:400;color:#3a3a3a;transform:scaleX(0.9150);transform-origin:0 0;">652,31</div><div class="t" style="left:967.59px;top:377.26px;font-size:12px;line-height:12px;font-weight:400;color:#3a3a3a;transform:scaleX(0.9150);transform-origin:0 0;">157,07</div><div class="t" style="left:1019.20px;top:377.26px;font-size:12px;line-height:12px;font-weight:400;color:#3a3a3a;transform:scaleX(0.9150);transform-origin:0 0;">4,43%</div><div class="t" style="left:1092.09px;top:377.26px;font-size:12px;line-height:12px;font-weight:400;color:#3a3a3a;transform:scaleX(0.9150);transform-origin:0 0;">117,99</div><div class="t" style="left:1149.70px;top:377.26px;font-size:12px;line-height:12px;font-weight:400;color:#3a3a3a;transform:scaleX(0.9150);transform-origin:0 0;">30</div><div class="t" style="left:1182.80px;top:377.26px;font-size:12px;line-height:12px;font-weight:400;color:#3a3a3a;transform:scaleX(0.9150);transform-origin:0 0;">55,00</div><div class="t" style="left:1223.18px;top:376.18px;font-size:9.5px;line-height:9.5px;font-weight:700;color:#ffffff;transform:scaleX(0.9200);transform-origin:0 0;-webkit-text-stroke:0.25px #fff;">31,79%</div><div class="t" style="left:1274.00px;top:377.26px;font-size:12px;line-height:12px;font-weight:400;color:#3a3a3a;transform:scaleX(0.9150);transform-origin:0 0;">3539,70</div><div class="t" style="left:1333.00px;top:377.26px;font-size:12px;line-height:12px;font-weight:400;color:#3a3a3a;transform:scaleX(0.9150);transform-origin:0 0;">70,79</div><div class="t" style="left:1373.68px;top:376.18px;font-size:9.5px;line-height:9.5px;font-weight:700;color:#ffffff;transform:scaleX(0.9200);transform-origin:0 0;-webkit-text-stroke:0.25px #fff;">2.0%</div><div class="t" style="left:1421.00px;top:377.26px;font-size:12px;line-height:12px;font-weight:400;color:#3a3a3a;transform:scaleX(0.9150);transform-origin:0 0;">652,31</div><div class="t" style="left:1489.59px;top:377.26px;font-size:12px;line-height:12px;font-weight:400;color:#3a3a3a;transform:scaleX(0.9150);transform-origin:0 0;">157,07</div><div class="t" style="left:1541.20px;top:377.26px;font-size:12px;line-height:12px;font-weight:400;color:#3a3a3a;transform:scaleX(0.9150);transform-origin:0 0;">4,43%</div><div class="t" style="left:101.80px;top:411.93px;font-size:12px;line-height:12px;font-weight:700;color:#1a1a1a;transform:scaleX(0.9900);transform-origin:0 0;text-decoration:underline;text-underline-offset:1.5px;">14606</div><div class="t" style="left:172.80px;top:411.93px;font-size:12px;line-height:12px;font-weight:400;color:#3a3a3a;transform:scaleX(0.8798);transform-origin:0 0;word-spacing:1.5px;">CAMISA BRIM CZA CEMIG R/LAR DY G COMMAN</div><div class="t" style="left:449.00px;top:411.93px;font-size:12px;line-height:12px;font-weight:400;color:#3a3a3a;transform:scaleX(0.9150);transform-origin:0 0;">86,48</div><div class="t" style="left:510.88px;top:411.93px;font-size:12px;line-height:12px;font-weight:400;color:#3a3a3a;transform:scaleX(0.9150);transform-origin:0 0;">172,99</div><div class="t" style="left:570.09px;top:411.93px;font-size:12px;line-height:12px;font-weight:400;color:#3a3a3a;transform:scaleX(0.9150);transform-origin:0 0;">117,99</div><div class="t" style="left:627.70px;top:411.93px;font-size:12px;line-height:12px;font-weight:400;color:#3a3a3a;transform:scaleX(0.9150);transform-origin:0 0;">45</div><div class="t" style="left:660.80px;top:411.93px;font-size:12px;line-height:12px;font-weight:400;color:#3a3a3a;transform:scaleX(0.9150);transform-origin:0 0;">55,00</div><div class="t" style="left:701.18px;top:410.85px;font-size:9.5px;line-height:9.5px;font-weight:700;color:#ffffff;transform:scaleX(0.9200);transform-origin:0 0;-webkit-text-stroke:0.25px #fff;">31,79%</div><div class="t" style="left:752.00px;top:411.93px;font-size:12px;line-height:12px;font-weight:400;color:#3a3a3a;transform:scaleX(0.9150);transform-origin:0 0;">5309,55</div><div class="t" style="left:811.59px;top:411.93px;font-size:12px;line-height:12px;font-weight:400;color:#3a3a3a;transform:scaleX(0.9150);transform-origin:0 0;">106,19</div><div class="t" style="left:857.78px;top:410.85px;font-size:9.5px;line-height:9.5px;font-weight:700;color:#ffffff;transform:scaleX(0.9200);transform-origin:0 0;-webkit-text-stroke:0.25px #fff;">2.0%</div><div class="t" style="left:899.00px;top:411.93px;font-size:12px;line-height:12px;font-weight:400;color:#3a3a3a;transform:scaleX(0.9150);transform-origin:0 0;">978,46</div><div class="t" style="left:967.00px;top:411.93px;font-size:12px;line-height:12px;font-weight:400;color:#3a3a3a;transform:scaleX(0.9150);transform-origin:0 0;">235,60</div><div class="t" style="left:1019.20px;top:411.93px;font-size:12px;line-height:12px;font-weight:400;color:#3a3a3a;transform:scaleX(0.9150);transform-origin:0 0;">4,43%</div><div class="t" style="left:1092.09px;top:411.93px;font-size:12px;line-height:12px;font-weight:400;color:#3a3a3a;transform:scaleX(0.9150);transform-origin:0 0;">117,99</div><div class="t" style="left:1149.70px;top:411.93px;font-size:12px;line-height:12px;font-weight:400;color:#3a3a3a;transform:scaleX(0.9150);transform-origin:0 0;">45</div><div class="t" style="left:1182.80px;top:411.93px;font-size:12px;line-height:12px;font-weight:400;color:#3a3a3a;transform:scaleX(0.9150);transform-origin:0 0;">55,00</div><div class="t" style="left:1223.18px;top:410.85px;font-size:9.5px;line-height:9.5px;font-weight:700;color:#ffffff;transform:scaleX(0.9200);transform-origin:0 0;-webkit-text-stroke:0.25px #fff;">31,79%</div><div class="t" style="left:1274.00px;top:411.93px;font-size:12px;line-height:12px;font-weight:400;color:#3a3a3a;transform:scaleX(0.9150);transform-origin:0 0;">5309,55</div><div class="t" style="left:1333.59px;top:411.93px;font-size:12px;line-height:12px;font-weight:400;color:#3a3a3a;transform:scaleX(0.9150);transform-origin:0 0;">106,19</div><div class="t" style="left:1379.78px;top:410.85px;font-size:9.5px;line-height:9.5px;font-weight:700;color:#ffffff;transform:scaleX(0.9200);transform-origin:0 0;-webkit-text-stroke:0.25px #fff;">2.0%</div><div class="t" style="left:1421.00px;top:411.93px;font-size:12px;line-height:12px;font-weight:400;color:#3a3a3a;transform:scaleX(0.9150);transform-origin:0 0;">978,46</div><div class="t" style="left:1489.00px;top:411.93px;font-size:12px;line-height:12px;font-weight:400;color:#3a3a3a;transform:scaleX(0.9150);transform-origin:0 0;">235,60</div><div class="t" style="left:1541.20px;top:411.93px;font-size:12px;line-height:12px;font-weight:400;color:#3a3a3a;transform:scaleX(0.9150);transform-origin:0 0;">4,43%</div><div class="t" style="left:101.80px;top:446.60px;font-size:12px;line-height:12px;font-weight:700;color:#1a1a1a;transform:scaleX(0.9900);transform-origin:0 0;text-decoration:underline;text-underline-offset:1.5px;">14403</div><div class="t" style="left:172.80px;top:446.60px;font-size:12px;line-height:12px;font-weight:400;color:#dc3545;transform:scaleX(0.8794);transform-origin:0 0;word-spacing:1.5px;">CAMISA BRIM CZA CEMIG R/LAR DY GG COMMAN</div><div class="t" style="left:449.00px;top:446.60px;font-size:12px;line-height:12px;font-weight:400;color:#3a3a3a;transform:scaleX(0.9150);transform-origin:0 0;">86,48</div><div class="t" style="left:510.88px;top:446.60px;font-size:12px;line-height:12px;font-weight:400;color:#3a3a3a;transform:scaleX(0.9150);transform-origin:0 0;">172,99</div><div class="t" style="left:570.09px;top:446.60px;font-size:12px;line-height:12px;font-weight:400;color:#3a3a3a;transform:scaleX(0.9150);transform-origin:0 0;">117,99</div><div class="t" style="left:627.70px;top:446.60px;font-size:12px;line-height:12px;font-weight:400;color:#3a3a3a;transform:scaleX(0.9150);transform-origin:0 0;">30</div><div class="t" style="left:660.80px;top:446.60px;font-size:12px;line-height:12px;font-weight:400;color:#3a3a3a;transform:scaleX(0.9150);transform-origin:0 0;">55,00</div><div class="t" style="left:701.18px;top:445.52px;font-size:9.5px;line-height:9.5px;font-weight:700;color:#ffffff;transform:scaleX(0.9200);transform-origin:0 0;-webkit-text-stroke:0.25px #fff;">31,79%</div><div class="t" style="left:752.00px;top:446.60px;font-size:12px;line-height:12px;font-weight:400;color:#3a3a3a;transform:scaleX(0.9150);transform-origin:0 0;">3539,70</div><div class="t" style="left:811.00px;top:446.60px;font-size:12px;line-height:12px;font-weight:400;color:#3a3a3a;transform:scaleX(0.9150);transform-origin:0 0;">70,79</div><div class="t" style="left:851.68px;top:445.52px;font-size:9.5px;line-height:9.5px;font-weight:700;color:#ffffff;transform:scaleX(0.9200);transform-origin:0 0;-webkit-text-stroke:0.25px #fff;">2.0%</div><div class="t" style="left:899.00px;top:446.60px;font-size:12px;line-height:12px;font-weight:400;color:#3a3a3a;transform:scaleX(0.9150);transform-origin:0 0;">652,31</div><div class="t" style="left:967.59px;top:446.60px;font-size:12px;line-height:12px;font-weight:400;color:#3a3a3a;transform:scaleX(0.9150);transform-origin:0 0;">157,07</div><div class="t" style="left:1019.20px;top:446.60px;font-size:12px;line-height:12px;font-weight:400;color:#3a3a3a;transform:scaleX(0.9150);transform-origin:0 0;">4,43%</div><div class="t" style="left:1092.09px;top:446.60px;font-size:12px;line-height:12px;font-weight:400;color:#3a3a3a;transform:scaleX(0.9150);transform-origin:0 0;">117,99</div><div class="t" style="left:1149.70px;top:446.60px;font-size:12px;line-height:12px;font-weight:400;color:#3a3a3a;transform:scaleX(0.9150);transform-origin:0 0;">30</div><div class="t" style="left:1182.80px;top:446.60px;font-size:12px;line-height:12px;font-weight:400;color:#3a3a3a;transform:scaleX(0.9150);transform-origin:0 0;">55,00</div><div class="t" style="left:1223.18px;top:445.52px;font-size:9.5px;line-height:9.5px;font-weight:700;color:#ffffff;transform:scaleX(0.9200);transform-origin:0 0;-webkit-text-stroke:0.25px #fff;">31,79%</div><div class="t" style="left:1274.00px;top:446.60px;font-size:12px;line-height:12px;font-weight:400;color:#3a3a3a;transform:scaleX(0.9150);transform-origin:0 0;">3539,70</div><div class="t" style="left:1333.00px;top:446.60px;font-size:12px;line-height:12px;font-weight:400;color:#3a3a3a;transform:scaleX(0.9150);transform-origin:0 0;">70,79</div><div class="t" style="left:1373.68px;top:445.52px;font-size:9.5px;line-height:9.5px;font-weight:700;color:#ffffff;transform:scaleX(0.9200);transform-origin:0 0;-webkit-text-stroke:0.25px #fff;">2.0%</div><div class="t" style="left:1421.00px;top:446.60px;font-size:12px;line-height:12px;font-weight:400;color:#3a3a3a;transform:scaleX(0.9150);transform-origin:0 0;">652,31</div><div class="t" style="left:1489.59px;top:446.60px;font-size:12px;line-height:12px;font-weight:400;color:#3a3a3a;transform:scaleX(0.9150);transform-origin:0 0;">157,07</div><div class="t" style="left:1541.20px;top:446.60px;font-size:12px;line-height:12px;font-weight:400;color:#3a3a3a;transform:scaleX(0.9150);transform-origin:0 0;">4,43%</div><div class="t" style="left:101.80px;top:481.27px;font-size:12px;line-height:12px;font-weight:700;color:#1a1a1a;transform:scaleX(0.9900);transform-origin:0 0;text-decoration:underline;text-underline-offset:1.5px;">14827</div><div class="t" style="left:172.80px;top:481.27px;font-size:12px;line-height:12px;font-weight:400;color:#3a3a3a;transform:scaleX(0.8786);transform-origin:0 0;word-spacing:1.5px;">CAMISA BRIM CZA CEMIG R/LAR DY XG COMMAN</div><div class="t" style="left:449.00px;top:481.27px;font-size:12px;line-height:12px;font-weight:400;color:#3a3a3a;transform:scaleX(0.9150);transform-origin:0 0;">86,48</div><div class="t" style="left:510.88px;top:481.27px;font-size:12px;line-height:12px;font-weight:400;color:#3a3a3a;transform:scaleX(0.9150);transform-origin:0 0;">172,99</div><div class="t" style="left:570.09px;top:481.27px;font-size:12px;line-height:12px;font-weight:400;color:#3a3a3a;transform:scaleX(0.9150);transform-origin:0 0;">117,99</div><div class="t" style="left:627.70px;top:481.27px;font-size:12px;line-height:12px;font-weight:400;color:#3a3a3a;transform:scaleX(0.9150);transform-origin:0 0;">21</div><div class="t" style="left:660.80px;top:481.27px;font-size:12px;line-height:12px;font-weight:400;color:#3a3a3a;transform:scaleX(0.9150);transform-origin:0 0;">55,00</div><div class="t" style="left:701.18px;top:480.19px;font-size:9.5px;line-height:9.5px;font-weight:700;color:#ffffff;transform:scaleX(0.9200);transform-origin:0 0;-webkit-text-stroke:0.25px #fff;">31,79%</div><div class="t" style="left:752.00px;top:481.27px;font-size:12px;line-height:12px;font-weight:400;color:#3a3a3a;transform:scaleX(0.9150);transform-origin:0 0;">2477,79</div><div class="t" style="left:811.00px;top:481.27px;font-size:12px;line-height:12px;font-weight:400;color:#3a3a3a;transform:scaleX(0.9150);transform-origin:0 0;">49,55</div><div class="t" style="left:851.68px;top:480.19px;font-size:9.5px;line-height:9.5px;font-weight:700;color:#ffffff;transform:scaleX(0.9200);transform-origin:0 0;-webkit-text-stroke:0.25px #fff;">2.0%</div><div class="t" style="left:899.00px;top:481.27px;font-size:12px;line-height:12px;font-weight:400;color:#3a3a3a;transform:scaleX(0.9150);transform-origin:0 0;">456,62</div><div class="t" style="left:967.59px;top:481.27px;font-size:12px;line-height:12px;font-weight:400;color:#3a3a3a;transform:scaleX(0.9150);transform-origin:0 0;">109,95</div><div class="t" style="left:1019.20px;top:481.27px;font-size:12px;line-height:12px;font-weight:400;color:#3a3a3a;transform:scaleX(0.9150);transform-origin:0 0;">4,43%</div><div class="t" style="left:1092.09px;top:481.27px;font-size:12px;line-height:12px;font-weight:400;color:#3a3a3a;transform:scaleX(0.9150);transform-origin:0 0;">117,99</div><div class="t" style="left:1149.70px;top:481.27px;font-size:12px;line-height:12px;font-weight:400;color:#3a3a3a;transform:scaleX(0.9150);transform-origin:0 0;">21</div><div class="t" style="left:1182.80px;top:481.27px;font-size:12px;line-height:12px;font-weight:400;color:#3a3a3a;transform:scaleX(0.9150);transform-origin:0 0;">55,00</div><div class="t" style="left:1223.18px;top:480.19px;font-size:9.5px;line-height:9.5px;font-weight:700;color:#ffffff;transform:scaleX(0.9200);transform-origin:0 0;-webkit-text-stroke:0.25px #fff;">31,79%</div><div class="t" style="left:1274.00px;top:481.27px;font-size:12px;line-height:12px;font-weight:400;color:#3a3a3a;transform:scaleX(0.9150);transform-origin:0 0;">2477,79</div><div class="t" style="left:1333.00px;top:481.27px;font-size:12px;line-height:12px;font-weight:400;color:#3a3a3a;transform:scaleX(0.9150);transform-origin:0 0;">49,55</div><div class="t" style="left:1373.68px;top:480.19px;font-size:9.5px;line-height:9.5px;font-weight:700;color:#ffffff;transform:scaleX(0.9200);transform-origin:0 0;-webkit-text-stroke:0.25px #fff;">2.0%</div><div class="t" style="left:1421.00px;top:481.27px;font-size:12px;line-height:12px;font-weight:400;color:#3a3a3a;transform:scaleX(0.9150);transform-origin:0 0;">456,62</div><div class="t" style="left:1489.59px;top:481.27px;font-size:12px;line-height:12px;font-weight:400;color:#3a3a3a;transform:scaleX(0.9150);transform-origin:0 0;">109,95</div><div class="t" style="left:1541.20px;top:481.27px;font-size:12px;line-height:12px;font-weight:400;color:#3a3a3a;transform:scaleX(0.9150);transform-origin:0 0;">4,43%</div><div class="t" style="left:101.80px;top:515.94px;font-size:12px;line-height:12px;font-weight:700;color:#1a1a1a;transform:scaleX(0.9900);transform-origin:0 0;text-decoration:underline;text-underline-offset:1.5px;">14774</div><div class="t" style="left:172.80px;top:515.94px;font-size:12px;line-height:12px;font-weight:400;color:#3a3a3a;transform:scaleX(0.8659);transform-origin:0 0;word-spacing:1.5px;">CAMISA BRIM CZA CEMIG R/LAR DY EXGG COMM</div><div class="t" style="left:449.00px;top:515.94px;font-size:12px;line-height:12px;font-weight:400;color:#3a3a3a;transform:scaleX(0.9150);transform-origin:0 0;">86,48</div><div class="t" style="left:510.88px;top:515.94px;font-size:12px;line-height:12px;font-weight:400;color:#3a3a3a;transform:scaleX(0.9150);transform-origin:0 0;">172,99</div><div class="t" style="left:570.09px;top:515.94px;font-size:12px;line-height:12px;font-weight:400;color:#3a3a3a;transform:scaleX(0.9150);transform-origin:0 0;">117,99</div><div class="t" style="left:628.29px;top:515.94px;font-size:12px;line-height:12px;font-weight:400;color:#3a3a3a;transform:scaleX(0.9150);transform-origin:0 0;">18</div><div class="t" style="left:660.80px;top:515.94px;font-size:12px;line-height:12px;font-weight:400;color:#3a3a3a;transform:scaleX(0.9150);transform-origin:0 0;">55,00</div><div class="t" style="left:701.18px;top:514.86px;font-size:9.5px;line-height:9.5px;font-weight:700;color:#ffffff;transform:scaleX(0.9200);transform-origin:0 0;-webkit-text-stroke:0.25px #fff;">31,79%</div><div class="t" style="left:752.00px;top:515.94px;font-size:12px;line-height:12px;font-weight:400;color:#3a3a3a;transform:scaleX(0.9150);transform-origin:0 0;">2123,82</div><div class="t" style="left:811.00px;top:515.94px;font-size:12px;line-height:12px;font-weight:400;color:#3a3a3a;transform:scaleX(0.9150);transform-origin:0 0;">42,47</div><div class="t" style="left:851.68px;top:514.86px;font-size:9.5px;line-height:9.5px;font-weight:700;color:#ffffff;transform:scaleX(0.9200);transform-origin:0 0;-webkit-text-stroke:0.25px #fff;">2.0%</div><div class="t" style="left:899.00px;top:515.94px;font-size:12px;line-height:12px;font-weight:400;color:#3a3a3a;transform:scaleX(0.9150);transform-origin:0 0;">391,38</div><div class="t" style="left:967.00px;top:515.94px;font-size:12px;line-height:12px;font-weight:400;color:#3a3a3a;transform:scaleX(0.9150);transform-origin:0 0;">94,25</div><div class="t" style="left:1019.20px;top:515.94px;font-size:12px;line-height:12px;font-weight:400;color:#3a3a3a;transform:scaleX(0.9150);transform-origin:0 0;">4,43%</div><div class="t" style="left:1092.09px;top:515.94px;font-size:12px;line-height:12px;font-weight:400;color:#3a3a3a;transform:scaleX(0.9150);transform-origin:0 0;">117,99</div><div class="t" style="left:1150.29px;top:515.94px;font-size:12px;line-height:12px;font-weight:400;color:#3a3a3a;transform:scaleX(0.9150);transform-origin:0 0;">18</div><div class="t" style="left:1182.80px;top:515.94px;font-size:12px;line-height:12px;font-weight:400;color:#3a3a3a;transform:scaleX(0.9150);transform-origin:0 0;">55,00</div><div class="t" style="left:1223.18px;top:514.86px;font-size:9.5px;line-height:9.5px;font-weight:700;color:#ffffff;transform:scaleX(0.9200);transform-origin:0 0;-webkit-text-stroke:0.25px #fff;">31,79%</div><div class="t" style="left:1274.00px;top:515.94px;font-size:12px;line-height:12px;font-weight:400;color:#3a3a3a;transform:scaleX(0.9150);transform-origin:0 0;">2123,82</div><div class="t" style="left:1333.00px;top:515.94px;font-size:12px;line-height:12px;font-weight:400;color:#3a3a3a;transform:scaleX(0.9150);transform-origin:0 0;">42,47</div><div class="t" style="left:1373.68px;top:514.86px;font-size:9.5px;line-height:9.5px;font-weight:700;color:#ffffff;transform:scaleX(0.9200);transform-origin:0 0;-webkit-text-stroke:0.25px #fff;">2.0%</div><div class="t" style="left:1421.00px;top:515.94px;font-size:12px;line-height:12px;font-weight:400;color:#3a3a3a;transform:scaleX(0.9150);transform-origin:0 0;">391,38</div><div class="t" style="left:1489.00px;top:515.94px;font-size:12px;line-height:12px;font-weight:400;color:#3a3a3a;transform:scaleX(0.9150);transform-origin:0 0;">94,25</div><div class="t" style="left:1541.20px;top:515.94px;font-size:12px;line-height:12px;font-weight:400;color:#3a3a3a;transform:scaleX(0.9150);transform-origin:0 0;">4,43%</div><div class="t" style="left:101.80px;top:550.61px;font-size:12px;line-height:12px;font-weight:700;color:#1a1a1a;transform:scaleX(0.9900);transform-origin:0 0;text-decoration:underline;text-underline-offset:1.5px;">14405</div><div class="t" style="left:172.80px;top:550.61px;font-size:12px;line-height:12px;font-weight:400;color:#dc3545;transform:scaleX(0.8707);transform-origin:0 0;word-spacing:1.5px;">CALCA BRIM CZA CEMIG R/LAR DY P COMMAN</div><div class="t" style="left:449.00px;top:550.61px;font-size:12px;line-height:12px;font-weight:400;color:#3a3a3a;transform:scaleX(0.9150);transform-origin:0 0;">80,34</div><div class="t" style="left:510.88px;top:550.61px;font-size:12px;line-height:12px;font-weight:400;color:#3a3a3a;transform:scaleX(0.9150);transform-origin:0 0;">160,99</div><div class="t" style="left:570.09px;top:550.61px;font-size:12px;line-height:12px;font-weight:400;color:#3a3a3a;transform:scaleX(0.9150);transform-origin:0 0;">117,99</div><div class="t" style="left:627.70px;top:550.61px;font-size:12px;line-height:12px;font-weight:400;color:#3a3a3a;transform:scaleX(0.9150);transform-origin:0 0;">30</div><div class="t" style="left:660.80px;top:550.61px;font-size:12px;line-height:12px;font-weight:400;color:#3a3a3a;transform:scaleX(0.9150);transform-origin:0 0;">43,00</div><div class="t" style="left:701.18px;top:549.53px;font-size:9.5px;line-height:9.5px;font-weight:700;color:#ffffff;transform:scaleX(0.9200);transform-origin:0 0;-webkit-text-stroke:0.25px #fff;">26,70%</div><div class="t" style="left:752.00px;top:550.61px;font-size:12px;line-height:12px;font-weight:400;color:#3a3a3a;transform:scaleX(0.9150);transform-origin:0 0;">3539,70</div><div class="t" style="left:811.00px;top:550.61px;font-size:12px;line-height:12px;font-weight:400;color:#3a3a3a;transform:scaleX(0.9150);transform-origin:0 0;">70,79</div><div class="t" style="left:851.68px;top:549.53px;font-size:9.5px;line-height:9.5px;font-weight:700;color:#ffffff;transform:scaleX(0.9200);transform-origin:0 0;-webkit-text-stroke:0.25px #fff;">2.0%</div><div class="t" style="left:899.00px;top:550.61px;font-size:12px;line-height:12px;font-weight:400;color:#3a3a3a;transform:scaleX(0.9150);transform-origin:0 0;">652,31</div><div class="t" style="left:967.00px;top:550.61px;font-size:12px;line-height:12px;font-weight:400;color:#3a3a3a;transform:scaleX(0.9150);transform-origin:0 0;">341,27</div><div class="t" style="left:1019.20px;top:550.61px;font-size:12px;line-height:12px;font-weight:400;color:#3a3a3a;transform:scaleX(0.9150);transform-origin:0 0;">9,64%</div><div class="t" style="left:1092.09px;top:550.61px;font-size:12px;line-height:12px;font-weight:400;color:#3a3a3a;transform:scaleX(0.9150);transform-origin:0 0;">117,99</div><div class="t" style="left:1149.70px;top:550.61px;font-size:12px;line-height:12px;font-weight:400;color:#3a3a3a;transform:scaleX(0.9150);transform-origin:0 0;">30</div><div class="t" style="left:1182.80px;top:550.61px;font-size:12px;line-height:12px;font-weight:400;color:#3a3a3a;transform:scaleX(0.9150);transform-origin:0 0;">43,00</div><div class="t" style="left:1223.18px;top:549.53px;font-size:9.5px;line-height:9.5px;font-weight:700;color:#ffffff;transform:scaleX(0.9200);transform-origin:0 0;-webkit-text-stroke:0.25px #fff;">26,70%</div><div class="t" style="left:1274.00px;top:550.61px;font-size:12px;line-height:12px;font-weight:400;color:#3a3a3a;transform:scaleX(0.9150);transform-origin:0 0;">3539,70</div><div class="t" style="left:1333.00px;top:550.61px;font-size:12px;line-height:12px;font-weight:400;color:#3a3a3a;transform:scaleX(0.9150);transform-origin:0 0;">70,79</div><div class="t" style="left:1373.68px;top:549.53px;font-size:9.5px;line-height:9.5px;font-weight:700;color:#ffffff;transform:scaleX(0.9200);transform-origin:0 0;-webkit-text-stroke:0.25px #fff;">2.0%</div><div class="t" style="left:1421.00px;top:550.61px;font-size:12px;line-height:12px;font-weight:400;color:#3a3a3a;transform:scaleX(0.9150);transform-origin:0 0;">652,31</div><div class="t" style="left:1489.00px;top:550.61px;font-size:12px;line-height:12px;font-weight:400;color:#3a3a3a;transform:scaleX(0.9150);transform-origin:0 0;">341,27</div><div class="t" style="left:1541.20px;top:550.61px;font-size:12px;line-height:12px;font-weight:400;color:#3a3a3a;transform:scaleX(0.9150);transform-origin:0 0;">9,64%</div><div class="t" style="left:101.80px;top:585.28px;font-size:12px;line-height:12px;font-weight:700;color:#1a1a1a;transform:scaleX(0.9900);transform-origin:0 0;text-decoration:underline;text-underline-offset:1.5px;">14444</div><div class="t" style="left:172.80px;top:585.28px;font-size:12px;line-height:12px;font-weight:400;color:#3a3a3a;transform:scaleX(0.8799);transform-origin:0 0;word-spacing:1.5px;">CALCA BRIM AZUL CEMIG RF/VD DY M COMMAN</div><div class="t" style="left:449.00px;top:585.28px;font-size:12px;line-height:12px;font-weight:400;color:#3a3a3a;transform:scaleX(0.9150);transform-origin:0 0;">84,92</div><div class="t" style="left:510.88px;top:585.28px;font-size:12px;line-height:12px;font-weight:400;color:#3a3a3a;transform:scaleX(0.9150);transform-origin:0 0;">169,99</div><div class="t" style="left:570.09px;top:585.28px;font-size:12px;line-height:12px;font-weight:400;color:#3a3a3a;transform:scaleX(0.9150);transform-origin:0 0;">117,99</div><div class="t" style="left:627.70px;top:585.28px;font-size:12px;line-height:12px;font-weight:400;color:#3a3a3a;transform:scaleX(0.9150);transform-origin:0 0;">30</div><div class="t" style="left:660.80px;top:585.28px;font-size:12px;line-height:12px;font-weight:400;color:#3a3a3a;transform:scaleX(0.9150);transform-origin:0 0;">52,00</div><div class="t" style="left:701.18px;top:584.20px;font-size:9.5px;line-height:9.5px;font-weight:700;color:#ffffff;transform:scaleX(0.9200);transform-origin:0 0;-webkit-text-stroke:0.25px #fff;">30,59%</div><div class="t" style="left:752.00px;top:585.28px;font-size:12px;line-height:12px;font-weight:400;color:#3a3a3a;transform:scaleX(0.9150);transform-origin:0 0;">3539,70</div><div class="t" style="left:811.00px;top:585.28px;font-size:12px;line-height:12px;font-weight:400;color:#3a3a3a;transform:scaleX(0.9150);transform-origin:0 0;">70,79</div><div class="t" style="left:851.68px;top:584.20px;font-size:9.5px;line-height:9.5px;font-weight:700;color:#ffffff;transform:scaleX(0.9200);transform-origin:0 0;-webkit-text-stroke:0.25px #fff;">2.0%</div><div class="t" style="left:899.00px;top:585.28px;font-size:12px;line-height:12px;font-weight:400;color:#3a3a3a;transform:scaleX(0.9150);transform-origin:0 0;">652,31</div><div class="t" style="left:967.00px;top:585.28px;font-size:12px;line-height:12px;font-weight:400;color:#3a3a3a;transform:scaleX(0.9150);transform-origin:0 0;">203,87</div><div class="t" style="left:1019.20px;top:585.28px;font-size:12px;line-height:12px;font-weight:400;color:#3a3a3a;transform:scaleX(0.9150);transform-origin:0 0;">5,75%</div><div class="t" style="left:101.80px;top:619.95px;font-size:12px;line-height:12px;font-weight:700;color:#1a1a1a;transform:scaleX(0.9900);transform-origin:0 0;text-decoration:underline;text-underline-offset:1.5px;">14617</div><div class="t" style="left:172.80px;top:619.95px;font-size:12px;line-height:12px;font-weight:400;color:#3a3a3a;transform:scaleX(0.8715);transform-origin:0 0;word-spacing:1.5px;">CALCA BRIM CZA CEMIG R/LAR DY G COMMAN</div><div class="t" style="left:449.00px;top:619.95px;font-size:12px;line-height:12px;font-weight:400;color:#3a3a3a;transform:scaleX(0.9150);transform-origin:0 0;">80,34</div><div class="t" style="left:510.88px;top:619.95px;font-size:12px;line-height:12px;font-weight:400;color:#3a3a3a;transform:scaleX(0.9150);transform-origin:0 0;">160,99</div><div class="t" style="left:570.09px;top:619.95px;font-size:12px;line-height:12px;font-weight:400;color:#3a3a3a;transform:scaleX(0.9150);transform-origin:0 0;">117,99</div><div class="t" style="left:627.70px;top:619.95px;font-size:12px;line-height:12px;font-weight:400;color:#3a3a3a;transform:scaleX(0.9150);transform-origin:0 0;">45</div><div class="t" style="left:660.80px;top:619.95px;font-size:12px;line-height:12px;font-weight:400;color:#3a3a3a;transform:scaleX(0.9150);transform-origin:0 0;">43,00</div><div class="t" style="left:701.18px;top:618.87px;font-size:9.5px;line-height:9.5px;font-weight:700;color:#ffffff;transform:scaleX(0.9200);transform-origin:0 0;-webkit-text-stroke:0.25px #fff;">26,70%</div><div class="t" style="left:752.00px;top:619.95px;font-size:12px;line-height:12px;font-weight:400;color:#3a3a3a;transform:scaleX(0.9150);transform-origin:0 0;">5309,55</div><div class="t" style="left:811.59px;top:619.95px;font-size:12px;line-height:12px;font-weight:400;color:#3a3a3a;transform:scaleX(0.9150);transform-origin:0 0;">106,19</div><div class="t" style="left:857.78px;top:618.87px;font-size:9.5px;line-height:9.5px;font-weight:700;color:#ffffff;transform:scaleX(0.9200);transform-origin:0 0;-webkit-text-stroke:0.25px #fff;">2.0%</div><div class="t" style="left:899.00px;top:619.95px;font-size:12px;line-height:12px;font-weight:400;color:#3a3a3a;transform:scaleX(0.9150);transform-origin:0 0;">978,46</div><div class="t" style="left:967.00px;top:619.95px;font-size:12px;line-height:12px;font-weight:400;color:#3a3a3a;transform:scaleX(0.9150);transform-origin:0 0;">511,90</div><div class="t" style="left:1019.20px;top:619.95px;font-size:12px;line-height:12px;font-weight:400;color:#3a3a3a;transform:scaleX(0.9150);transform-origin:0 0;">9,64%</div><div class="t" style="left:1092.09px;top:619.95px;font-size:12px;line-height:12px;font-weight:400;color:#3a3a3a;transform:scaleX(0.9150);transform-origin:0 0;">117,99</div><div class="t" style="left:1149.70px;top:619.95px;font-size:12px;line-height:12px;font-weight:400;color:#3a3a3a;transform:scaleX(0.9150);transform-origin:0 0;">45</div><div class="t" style="left:1182.80px;top:619.95px;font-size:12px;line-height:12px;font-weight:400;color:#3a3a3a;transform:scaleX(0.9150);transform-origin:0 0;">43,00</div><div class="t" style="left:1223.18px;top:618.87px;font-size:9.5px;line-height:9.5px;font-weight:700;color:#ffffff;transform:scaleX(0.9200);transform-origin:0 0;-webkit-text-stroke:0.25px #fff;">26,70%</div><div class="t" style="left:1274.00px;top:619.95px;font-size:12px;line-height:12px;font-weight:400;color:#3a3a3a;transform:scaleX(0.9150);transform-origin:0 0;">5309,55</div><div class="t" style="left:1333.59px;top:619.95px;font-size:12px;line-height:12px;font-weight:400;color:#3a3a3a;transform:scaleX(0.9150);transform-origin:0 0;">106,19</div><div class="t" style="left:1379.78px;top:618.87px;font-size:9.5px;line-height:9.5px;font-weight:700;color:#ffffff;transform:scaleX(0.9200);transform-origin:0 0;-webkit-text-stroke:0.25px #fff;">2.0%</div><div class="t" style="left:1421.00px;top:619.95px;font-size:12px;line-height:12px;font-weight:400;color:#3a3a3a;transform:scaleX(0.9150);transform-origin:0 0;">978,46</div><div class="t" style="left:1489.00px;top:619.95px;font-size:12px;line-height:12px;font-weight:400;color:#3a3a3a;transform:scaleX(0.9150);transform-origin:0 0;">511,90</div><div class="t" style="left:1541.20px;top:619.95px;font-size:12px;line-height:12px;font-weight:400;color:#3a3a3a;transform:scaleX(0.9150);transform-origin:0 0;">9,64%</div><div class="t" style="left:101.80px;top:654.62px;font-size:12px;line-height:12px;font-weight:700;color:#1a1a1a;transform:scaleX(0.9900);transform-origin:0 0;text-decoration:underline;text-underline-offset:1.5px;">14406</div><div class="t" style="left:172.80px;top:654.62px;font-size:12px;line-height:12px;font-weight:400;color:#dc3545;transform:scaleX(0.8721);transform-origin:0 0;word-spacing:1.5px;">CALCA BRIM CZA CEMIG R/LAR DY GG COMMAN</div><div class="t" style="left:449.00px;top:654.62px;font-size:12px;line-height:12px;font-weight:400;color:#3a3a3a;transform:scaleX(0.9150);transform-origin:0 0;">80,34</div><div class="t" style="left:510.88px;top:654.62px;font-size:12px;line-height:12px;font-weight:400;color:#3a3a3a;transform:scaleX(0.9150);transform-origin:0 0;">160,99</div><div class="t" style="left:570.09px;top:654.62px;font-size:12px;line-height:12px;font-weight:400;color:#3a3a3a;transform:scaleX(0.9150);transform-origin:0 0;">117,99</div><div class="t" style="left:627.70px;top:654.62px;font-size:12px;line-height:12px;font-weight:400;color:#3a3a3a;transform:scaleX(0.9150);transform-origin:0 0;">45</div><div class="t" style="left:660.80px;top:654.62px;font-size:12px;line-height:12px;font-weight:400;color:#3a3a3a;transform:scaleX(0.9150);transform-origin:0 0;">43,00</div><div class="t" style="left:701.18px;top:653.54px;font-size:9.5px;line-height:9.5px;font-weight:700;color:#ffffff;transform:scaleX(0.9200);transform-origin:0 0;-webkit-text-stroke:0.25px #fff;">26,70%</div><div class="t" style="left:752.00px;top:654.62px;font-size:12px;line-height:12px;font-weight:400;color:#3a3a3a;transform:scaleX(0.9150);transform-origin:0 0;">5309,55</div><div class="t" style="left:811.59px;top:654.62px;font-size:12px;line-height:12px;font-weight:400;color:#3a3a3a;transform:scaleX(0.9150);transform-origin:0 0;">106,19</div><div class="t" style="left:857.78px;top:653.54px;font-size:9.5px;line-height:9.5px;font-weight:700;color:#ffffff;transform:scaleX(0.9200);transform-origin:0 0;-webkit-text-stroke:0.25px #fff;">2.0%</div><div class="t" style="left:899.00px;top:654.62px;font-size:12px;line-height:12px;font-weight:400;color:#3a3a3a;transform:scaleX(0.9150);transform-origin:0 0;">978,46</div><div class="t" style="left:967.00px;top:654.62px;font-size:12px;line-height:12px;font-weight:400;color:#3a3a3a;transform:scaleX(0.9150);transform-origin:0 0;">511,90</div><div class="t" style="left:1019.20px;top:654.62px;font-size:12px;line-height:12px;font-weight:400;color:#3a3a3a;transform:scaleX(0.9150);transform-origin:0 0;">9,64%</div><div class="t" style="left:1092.09px;top:654.62px;font-size:12px;line-height:12px;font-weight:400;color:#3a3a3a;transform:scaleX(0.9150);transform-origin:0 0;">117,99</div><div class="t" style="left:1149.70px;top:654.62px;font-size:12px;line-height:12px;font-weight:400;color:#3a3a3a;transform:scaleX(0.9150);transform-origin:0 0;">45</div><div class="t" style="left:1182.80px;top:654.62px;font-size:12px;line-height:12px;font-weight:400;color:#3a3a3a;transform:scaleX(0.9150);transform-origin:0 0;">43,00</div><div class="t" style="left:1223.18px;top:653.54px;font-size:9.5px;line-height:9.5px;font-weight:700;color:#ffffff;transform:scaleX(0.9200);transform-origin:0 0;-webkit-text-stroke:0.25px #fff;">26,70%</div><div class="t" style="left:1274.00px;top:654.62px;font-size:12px;line-height:12px;font-weight:400;color:#3a3a3a;transform:scaleX(0.9150);transform-origin:0 0;">5309,55</div><div class="t" style="left:1333.59px;top:654.62px;font-size:12px;line-height:12px;font-weight:400;color:#3a3a3a;transform:scaleX(0.9150);transform-origin:0 0;">106,19</div><div class="t" style="left:1379.78px;top:653.54px;font-size:9.5px;line-height:9.5px;font-weight:700;color:#ffffff;transform:scaleX(0.9200);transform-origin:0 0;-webkit-text-stroke:0.25px #fff;">2.0%</div><div class="t" style="left:1421.00px;top:654.62px;font-size:12px;line-height:12px;font-weight:400;color:#3a3a3a;transform:scaleX(0.9150);transform-origin:0 0;">978,46</div><div class="t" style="left:1489.00px;top:654.62px;font-size:12px;line-height:12px;font-weight:400;color:#3a3a3a;transform:scaleX(0.9150);transform-origin:0 0;">511,90</div><div class="t" style="left:1541.20px;top:654.62px;font-size:12px;line-height:12px;font-weight:400;color:#3a3a3a;transform:scaleX(0.9150);transform-origin:0 0;">9,64%</div><div class="t" style="left:101.80px;top:689.29px;font-size:12px;line-height:12px;font-weight:700;color:#1a1a1a;transform:scaleX(0.9900);transform-origin:0 0;text-decoration:underline;text-underline-offset:1.5px;">14828</div><div class="t" style="left:172.80px;top:689.29px;font-size:12px;line-height:12px;font-weight:400;color:#3a3a3a;transform:scaleX(0.8702);transform-origin:0 0;word-spacing:1.5px;">CALCA BRIM CZA CEMIG R/LAR DY XG COMMAN</div><div class="t" style="left:449.00px;top:689.29px;font-size:12px;line-height:12px;font-weight:400;color:#3a3a3a;transform:scaleX(0.9150);transform-origin:0 0;">80,34</div><div class="t" style="left:510.88px;top:689.29px;font-size:12px;line-height:12px;font-weight:400;color:#3a3a3a;transform:scaleX(0.9150);transform-origin:0 0;">160,99</div><div class="t" style="left:570.09px;top:689.29px;font-size:12px;line-height:12px;font-weight:400;color:#3a3a3a;transform:scaleX(0.9150);transform-origin:0 0;">117,99</div><div class="t" style="left:628.29px;top:689.29px;font-size:12px;line-height:12px;font-weight:400;color:#3a3a3a;transform:scaleX(0.9150);transform-origin:0 0;">18</div><div class="t" style="left:660.80px;top:689.29px;font-size:12px;line-height:12px;font-weight:400;color:#3a3a3a;transform:scaleX(0.9150);transform-origin:0 0;">43,00</div><div class="t" style="left:701.18px;top:688.21px;font-size:9.5px;line-height:9.5px;font-weight:700;color:#ffffff;transform:scaleX(0.9200);transform-origin:0 0;-webkit-text-stroke:0.25px #fff;">26,70%</div><div class="t" style="left:752.00px;top:689.29px;font-size:12px;line-height:12px;font-weight:400;color:#3a3a3a;transform:scaleX(0.9150);transform-origin:0 0;">2123,82</div><div class="t" style="left:811.00px;top:689.29px;font-size:12px;line-height:12px;font-weight:400;color:#3a3a3a;transform:scaleX(0.9150);transform-origin:0 0;">42,47</div><div class="t" style="left:851.68px;top:688.21px;font-size:9.5px;line-height:9.5px;font-weight:700;color:#ffffff;transform:scaleX(0.9200);transform-origin:0 0;-webkit-text-stroke:0.25px #fff;">2.0%</div><div class="t" style="left:899.00px;top:689.29px;font-size:12px;line-height:12px;font-weight:400;color:#3a3a3a;transform:scaleX(0.9150);transform-origin:0 0;">391,38</div><div class="t" style="left:967.00px;top:689.29px;font-size:12px;line-height:12px;font-weight:400;color:#3a3a3a;transform:scaleX(0.9150);transform-origin:0 0;">204,77</div><div class="t" style="left:1019.20px;top:689.29px;font-size:12px;line-height:12px;font-weight:400;color:#3a3a3a;transform:scaleX(0.9150);transform-origin:0 0;">9,64%</div><div class="t" style="left:1092.09px;top:689.29px;font-size:12px;line-height:12px;font-weight:400;color:#3a3a3a;transform:scaleX(0.9150);transform-origin:0 0;">117,99</div><div class="t" style="left:1150.29px;top:689.29px;font-size:12px;line-height:12px;font-weight:400;color:#3a3a3a;transform:scaleX(0.9150);transform-origin:0 0;">18</div><div class="t" style="left:1182.80px;top:689.29px;font-size:12px;line-height:12px;font-weight:400;color:#3a3a3a;transform:scaleX(0.9150);transform-origin:0 0;">43,00</div><div class="t" style="left:1223.18px;top:688.21px;font-size:9.5px;line-height:9.5px;font-weight:700;color:#ffffff;transform:scaleX(0.9200);transform-origin:0 0;-webkit-text-stroke:0.25px #fff;">26,70%</div><div class="t" style="left:1274.00px;top:689.29px;font-size:12px;line-height:12px;font-weight:400;color:#3a3a3a;transform:scaleX(0.9150);transform-origin:0 0;">2123,82</div><div class="t" style="left:1333.00px;top:689.29px;font-size:12px;line-height:12px;font-weight:400;color:#3a3a3a;transform:scaleX(0.9150);transform-origin:0 0;">42,47</div><div class="t" style="left:1373.68px;top:688.21px;font-size:9.5px;line-height:9.5px;font-weight:700;color:#ffffff;transform:scaleX(0.9200);transform-origin:0 0;-webkit-text-stroke:0.25px #fff;">2.0%</div><div class="t" style="left:1421.00px;top:689.29px;font-size:12px;line-height:12px;font-weight:400;color:#3a3a3a;transform:scaleX(0.9150);transform-origin:0 0;">391,38</div><div class="t" style="left:1489.00px;top:689.29px;font-size:12px;line-height:12px;font-weight:400;color:#3a3a3a;transform:scaleX(0.9150);transform-origin:0 0;">204,77</div><div class="t" style="left:1541.20px;top:689.29px;font-size:12px;line-height:12px;font-weight:400;color:#3a3a3a;transform:scaleX(0.9150);transform-origin:0 0;">9,64%</div><div class="t" style="left:449.00px;top:733.87px;font-size:11.5px;line-height:11.5px;font-weight:700;color:#111;transform:scaleX(0.9000);transform-origin:0 0;">29485,44</div><div class="t" style="left:510.30px;top:733.87px;font-size:11.5px;line-height:11.5px;font-weight:700;color:#111;transform:scaleX(0.9000);transform-origin:0 0;">59026,48</div><div class="t" style="left:569.50px;top:733.87px;font-size:11.5px;line-height:11.5px;font-weight:700;color:#111;transform:scaleX(0.9000);transform-origin:0 0;">41532,48</div><div class="t" style="left:627.70px;top:733.87px;font-size:11.5px;line-height:11.5px;font-weight:700;color:#111;transform:scaleX(0.9000);transform-origin:0 0;">352</div><div class="t" style="left:660.80px;top:733.87px;font-size:11.5px;line-height:11.5px;font-weight:700;color:#111;transform:scaleX(0.9000);transform-origin:0 0;">597,00</div><div class="t" style="left:752.00px;top:733.87px;font-size:11.5px;line-height:11.5px;font-weight:700;color:#111;transform:scaleX(0.9000);transform-origin:0 0;">41532,48</div><div class="t" style="left:811.00px;top:733.87px;font-size:11.5px;line-height:11.5px;font-weight:700;color:#111;transform:scaleX(0.9000);transform-origin:0 0;">830,60</div><div class="t" style="left:899.00px;top:733.87px;font-size:11.5px;line-height:11.5px;font-weight:700;color:#111;transform:scaleX(0.9000);transform-origin:0 0;">7653,74</div><div class="t" style="left:967.00px;top:733.87px;font-size:11.5px;line-height:11.5px;font-weight:700;color:#111;transform:scaleX(0.9000);transform-origin:0 0;">2798,49</div><div class="t" style="left:1019.20px;top:733.87px;font-size:11.5px;line-height:11.5px;font-weight:700;color:#111;transform:scaleX(0.9000);transform-origin:0 0;">6,74%</div><div class="t" style="left:1091.50px;top:733.87px;font-size:11.5px;line-height:11.5px;font-weight:700;color:#111;transform:scaleX(0.9000);transform-origin:0 0;">42476,40</div><div class="t" style="left:1149.70px;top:733.87px;font-size:11.5px;line-height:11.5px;font-weight:700;color:#111;transform:scaleX(0.9000);transform-origin:0 0;">360</div><div class="t" style="left:1182.80px;top:733.87px;font-size:11.5px;line-height:11.5px;font-weight:700;color:#111;transform:scaleX(0.9000);transform-origin:0 0;">588,00</div><div class="t" style="left:1274.00px;top:733.87px;font-size:11.5px;line-height:11.5px;font-weight:700;color:#111;transform:scaleX(0.9000);transform-origin:0 0;">42476,40</div><div class="t" style="left:1333.00px;top:733.87px;font-size:11.5px;line-height:11.5px;font-weight:700;color:#111;transform:scaleX(0.9000);transform-origin:0 0;">849,48</div><div class="t" style="left:1421.00px;top:733.87px;font-size:11.5px;line-height:11.5px;font-weight:700;color:#111;transform:scaleX(0.9000);transform-origin:0 0;">7827,69</div><div class="t" style="left:1489.00px;top:733.87px;font-size:11.5px;line-height:11.5px;font-weight:700;color:#111;transform:scaleX(0.9000);transform-origin:0 0;">3026,89</div><div class="t" style="left:1541.20px;top:733.87px;font-size:11.5px;line-height:11.5px;font-weight:700;color:#111;transform:scaleX(0.9000);transform-origin:0 0;">7,13%</div><div class="t" style="left:80.80px;top:795.57px;font-size:13.5px;line-height:13.5px;font-weight:400;color:#3b3b3b;transform:scaleX(0.9771);transform-origin:0 0;">Voltar</div>
</body></html>
